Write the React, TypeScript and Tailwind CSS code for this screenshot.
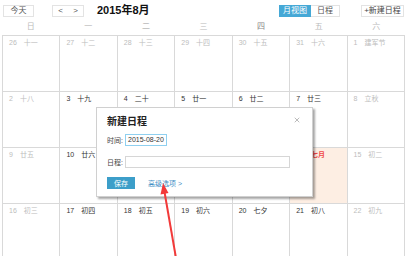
import { X } from 'lucide-react';

type Day = { n: string; l: string; muted?: boolean; red?: boolean; today?: boolean };

const weeks: Day[][] = [
  [
    { n: '26', l: '十一', muted: true },
    { n: '27', l: '十二', muted: true },
    { n: '28', l: '十三', muted: true },
    { n: '29', l: '十四', muted: true },
    { n: '30', l: '十五', muted: true },
    { n: '31', l: '十六', muted: true },
    { n: '1', l: '建军节', muted: true },
  ],
  [
    { n: '2', l: '十八', muted: true },
    { n: '3', l: '十九' },
    { n: '4', l: '二十' },
    { n: '5', l: '廿一' },
    { n: '6', l: '廿二' },
    { n: '7', l: '廿三' },
    { n: '8', l: '立秋', muted: true },
  ],
  [
    { n: '9', l: '廿五', muted: true },
    { n: '10', l: '廿六' },
    { n: '11', l: '廿七' },
    { n: '12', l: '廿八' },
    { n: '13', l: '廿九' },
    { n: '14', l: '七月', red: true, today: true },
    { n: '15', l: '初二', muted: true },
  ],
  [
    { n: '16', l: '初三', muted: true },
    { n: '17', l: '初四' },
    { n: '18', l: '初五' },
    { n: '19', l: '初六' },
    { n: '20', l: '七夕' },
    { n: '21', l: '初八' },
    { n: '22', l: '初九', muted: true },
  ],
];

const weekdays = ['日', '一', '二', '三', '四', '五', '六'];

export default function App() {
  return (
    <div className="relative w-[407px] h-[256px] overflow-hidden bg-white font-['Liberation_Sans','Noto_Sans_CJK_SC',sans-serif] text-[#333]">
      {/* toolbar */}
      <div className="flex items-center h-[18px] pt-[3px] px-[3px]">
        <button className="w-[31px] h-[12px] border border-[#e3e3e3] text-[8px] leading-none text-[#555]">今天</button>
        <div className="ml-[18px] flex h-[12px] border border-[#e3e3e3]">
          <button className="w-[15px] text-[8px] leading-none text-[#555]">&lt;</button>
          <button className="w-[15px] text-[8px] leading-none text-[#555]">&gt;</button>
        </div>
        <div className="ml-[13px] text-[11px] font-bold leading-none text-[#111] whitespace-nowrap">2015年8月</div>
        <div className="ml-auto flex h-[12px]">
          <button className="w-[32px] bg-[#45a8d6] text-[8px] leading-none text-white">月视图</button>
          <button className="w-[29px] border border-l-0 border-[#e3e3e3] text-[8px] leading-none text-[#555]">日程</button>
        </div>
        <button className="ml-[21px] w-[43px] h-[12px] border border-[#e3e3e3] text-[8px] leading-none text-[#444] whitespace-nowrap">+新建日程</button>
      </div>

      {/* weekday header */}
      <div className="ml-[2px] w-[403px] grid grid-cols-7 h-[17px] items-center">
        {weekdays.map((w) => (
          <div key={w} className={`text-center text-[8px] leading-none ${w === '四' ? 'text-[#888]' : 'text-[#bbb]'}`}>
            {w}
          </div>
        ))}
      </div>

      {/* month grid */}
      <div className="ml-[2px] w-[403px] grid grid-cols-7 border-t border-l border-[#d9d9d9]">
        {weeks.flat().map((d, i) => (
          <div
            key={i}
            className={`h-[56px] border-r border-b border-[#d9d9d9] pt-[2px] pl-[6px] flex gap-[7px] text-[7px] leading-[10px] whitespace-nowrap ${
              d.today ? 'bg-[#fdeee3]' : 'bg-white'
            } ${d.muted ? 'text-[#bdbdbd]' : 'text-[#333]'}`}
          >
            <span>{d.n}</span>
            <span className={d.red ? 'text-[#f04848] font-bold' : ''}>{d.l}</span>
          </div>
        ))}
      </div>

      {/* new event dialog */}
      <div className="absolute left-[96px] top-[107px] w-[217px] h-[90px] bg-white border border-[#d0d0d0] shadow-[2px_2px_2px_rgba(0,0,0,0.35)] px-[10px] pt-[7px] flex flex-col">
        <button className="absolute right-[11px] top-[8px] text-[#777]">
          <X size={8} strokeWidth={1.5} />
        </button>
        <div className="h-[14px] text-[10px] font-bold leading-[14px] text-[#222]">新建日程</div>
        <div className="mt-[5px] flex items-center h-[12px]">
          <span className="w-[18px] shrink-0 whitespace-nowrap text-[7px] leading-none text-[#444]">时间:</span>
          <div className="w-[42px] h-[12px] border border-[#8fd0f0] text-[7px] leading-[10px] pl-[2px] text-[#333] whitespace-nowrap overflow-hidden">2015-08-20</div>
        </div>
        <div className="mt-[10px] flex items-center h-[12px]">
          <span className="w-[18px] shrink-0 whitespace-nowrap text-[7px] leading-none text-[#444]">日程:</span>
          <div className="w-[165px] h-[12px] border border-[#d6d6d6]" />
        </div>
        <div className="mt-[9px] flex items-center h-[12px]">
          <button className="w-[28px] h-[12px] bg-[#3c9ec9] text-[7px] leading-none text-white">保存</button>
          <span className="ml-[13px] whitespace-nowrap text-[7px] leading-none text-[#3f8fc4]">高级选项 &gt;</span>
        </div>
      </div>

      {/* red arrow annotation */}
      <svg className="absolute left-0 top-0" width="407" height="256" viewBox="0 0 407 256">
        <line x1="176" y1="258" x2="164.5" y2="192" stroke="#f23a3a" strokeWidth="2" />
        <polygon points="163,183 168.5,193 160.5,194.5" fill="#f23a3a" />
      </svg>
    </div>
  );
}
